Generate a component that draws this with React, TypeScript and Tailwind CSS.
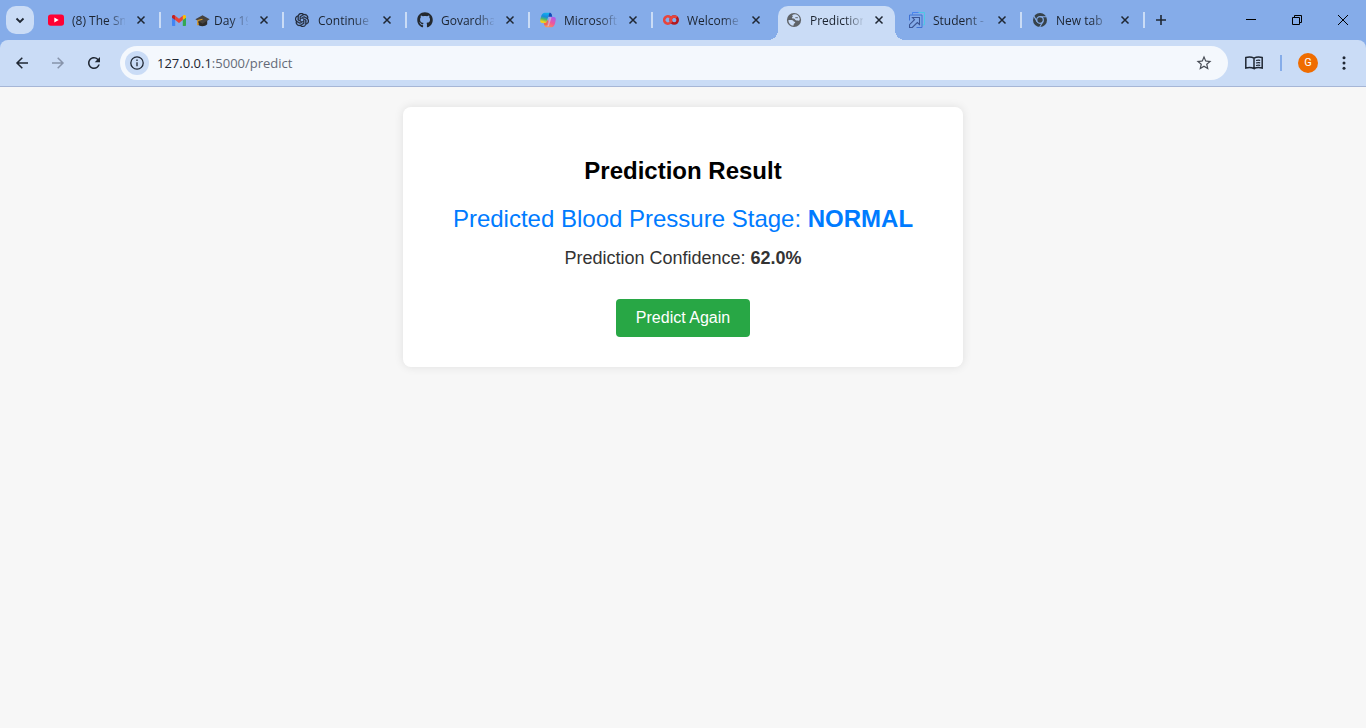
import type { ReactNode } from "react";
import { SiOpenai } from "react-icons/si";
import { FaGithub } from "react-icons/fa";
import { MdRefresh, MdStarOutline } from "react-icons/md";

function YouTubeIcon() {
  return (
    <svg viewBox="0 0 16 16" className="size-4">
      <rect x="0" y="2.4" width="16" height="11.4" rx="2.8" fill="#ff0033" />
      <path d="M6.3 5.6v5l4.4-2.5z" fill="#fff" />
    </svg>
  );
}

function GmailIcon() {
  return (
    <svg viewBox="0 0 14 11" className="h-[11px] w-3.5">
      <path d="M0 2v8c0 .6.400 1 1 1h2.200V4.200z" fill="#4285f4" />
      <path d="M14 2v8c0 .6-.4 1-1 1h-2.200V4.200z" fill="#34a853" />
      <path d="M10.800.8v4.300L14 2.700V1.500C14 .2 12.500-.5 11.500.3z" fill="#fbbc04" />
      <path d="M3.200 5.100V.8L7 3.700 10.800.8v4.300L7 8z" fill="#ea4335" />
      <path d="M0 1.500v1.200l3.200 2.400V.8L2.500.3C1.500-.5 0 .2 0 1.500z" fill="#c5221f" />
    </svg>
  );
}

function CopilotIcon() {
  return (
    <svg viewBox="0 0 16 16" className="size-4">
      <defs>
        <linearGradient id="copilotCool" x1="0.6" y1="0" x2="0.3" y2="1">
          <stop offset="0" stopColor="#12b4ee" />
          <stop offset="0.4" stopColor="#1689dd" />
          <stop offset="0.65" stopColor="#52b86a" />
          <stop offset="0.9" stopColor="#f4d11a" />
        </linearGradient>
        <linearGradient id="copilotWarm" x1="0.8" y1="0" x2="0.2" y2="1">
          <stop offset="0" stopColor="#a85cf0" />
          <stop offset="0.5" stopColor="#f0569a" />
          <stop offset="1" stopColor="#ff9a4a" />
        </linearGradient>
      </defs>
      <path d="M11.600 2.300A2.200 2.200 0 0 0 9.500.8H4.600C2.300.8 1.500 3 .9 5.200.2 7.800-.7 11 2.300 11h2.400a2.200 2.200 0 0 0 2.100-1.600l1.700-5.800c.2-.6.700-1 1.300-1z" fill="url(#copilotCool)" />
      <path d="M9.500.8c1.100 0 1.800.6 2.100 1.500l.7 2.500H8.200l.5-1.600z" fill="#1648b8" />
      <path d="M4.500 13.800a2.200 2.200 0 0 0 2.100 1.500h4.700c2.400 0 3.200-2.200 3.800-4.400.7-2.600 1.600-6-1.400-6h-2.400a2.200 2.200 0 0 0-2.100 1.600l-1.700 5.900c-.2.600-.7 1-1.300 1z" fill="url(#copilotWarm)" />
      <path d="M3.700 11h1a2.200 2.200 0 0 0 2.100-1.600l.5-1.500.9 1-.7 3.500c-.2.600-.7 1-1.300 1H4.500z" fill="#f5674d" />
      <path d="M9.600 5.200h2l-2.800 9H6.900c.5-.2.8-.6 1-1.200z" fill="#c5dcf5" opacity="0.55" />
    </svg>
  );
}

function ColabIcon() {
  return (
    <svg viewBox="0 0 16 16" className="size-4" fill="none" strokeWidth="2.600">
      <path d="M7.300 5.400A3.600 3.600 0 1 0 7.300 10.600" stroke="#e8453c" />
      <circle cx="11.200" cy="8" r="3.500" stroke="#b3191f" />
      <path d="M8.700 10.500a3.500 3.500 0 0 1 5-5" stroke="#e8453c" />
    </svg>
  );
}

function GlobeIcon() {
  return (
    <svg viewBox="0 0 16 16" className="size-4">
      <circle cx="8" cy="8" r="7.100" fill="#5f6368" />
      <path d="M6.200 3.300c1.300-1.300 3.600-1.500 5.200-.4 1.700 1.200 2.400 3 2.300 4.900-.4 1.100-1.200 1-2.100.8-.9-.3-1.500-.3-2.200-.7-.7-.5-.7-1.100-1.600-1.300-.8-.1-1.700-.1-1.800-.9 0-.7.7-.7.8-1.300 0-.5-.8-.7-.6-1.100z" fill="#cadcf6" />
      <path d="M9.300 5.200h2.600v1H9.300z" fill="#5f6368" />
      <path d="M2.300 8.200c1.400-.2 3-.2 4.200.1.900.2.900.9 1.400 1.200.6.300 1.300.2 1.300.9 0 .8-1 .7-1.300 1.300-.3.700-.1 1.700-.8 2.100C4.500 13.400 2.400 11 2.300 8.200z" fill="#cadcf6" />
    </svg>
  );
}

function ShortcutIcon() {
  return (
    <svg viewBox="0 0 16 16" className="size-4" fill="none">
      <path d="M3.500 2.500v-2h12v12.300h-2" stroke="#4cc9e6" strokeWidth="1" />
      <path d="M3.500 2.500v-2h6" stroke="#4a82f0" strokeWidth="1" />
      <path d="M.5 8.500v-5.500h12.500v12.500H7.500" stroke="#3f72d4" strokeWidth="1" />
      <path d="M3.500 5.500h7v7l-2.200-2-5 5H.5v-2.800l5-5z" stroke="#3a5492" strokeWidth="1.100" />
    </svg>
  );
}

function ChromeIcon() {
  return (
    <svg viewBox="0 0 16 16" className="size-4" fill="none">
      <circle cx="8" cy="8" r="7" fill="#36424a" />
      <circle cx="8" cy="8" r="3.300" stroke="#85ace9" strokeWidth="1.200" />
      <path d="M8 4.700h6.800M5.100 9.600 1.700 3.800M10.900 9.600 7.500 15.500" stroke="#85ace9" strokeWidth="1.100" />
    </svg>
  );
}

function GraduationCap() {
  return (
    <svg viewBox="0 0 16 16" className="mr-1 size-[15px] shrink-0" role="img" aria-label="Graduation cap">
      <path d="M3 7v5c1.500 2.800 8 2.800 10 0V7z" fill="#2c2b2a" />
      <path d="M8 2.500.4 6.600 8 11.500l7.600-4.900z" fill="#45423f" />
      <path d="M8 6.600 3 8v3.800" fill="none" stroke="#d99a2b" strokeWidth="1.200" />
      <path d="M2.200 10.800h1.700V13H2.200z" fill="#d99a2b" />
    </svg>
  );
}

function CloseGlyph() {
  return (
    <svg viewBox="0 0 16 16" className="size-4" fill="none" stroke="#1f2733" strokeWidth="1.500">
      <path d="m4.500 4.500 7 7M11.500 4.500l-7 7" />
    </svg>
  );
}

type Tab = {
  title: string;
  icon: ReactNode;
  lead?: ReactNode;
  active?: boolean;
  divider?: boolean;
};

const tabs: Tab[] = [
  { title: "(8) The Sm", icon: <YouTubeIcon />, divider: true },
  { title: "Day 19", icon: <GmailIcon />, lead: <GraduationCap />, divider: true },
  {
    title: "Continue",
    icon: <SiOpenai className="size-3.5 stroke-[#1f2733] stroke-[0.6] text-[#1f2733]" />,
    divider: true,
  },
  { title: "Govardha", icon: <FaGithub className="size-4 text-[#24292f]" />, divider: true },
  { title: "Microsoft", icon: <CopilotIcon />, divider: true },
  { title: "Welcome", icon: <ColabIcon /> },
  { title: "Prediction", icon: <GlobeIcon />, active: true },
  { title: "Student -", icon: <ShortcutIcon />, divider: true },
  { title: "New tab", icon: <ChromeIcon />, divider: true },
];

function BrowserTab({ tab }: { tab: Tab }) {
  return (
    <div className="flex h-[34px] w-[123px] shrink-0 items-start">
      <div
        className={
          tab.active
            ? "relative flex h-[34px] w-[117px] rounded-t-[10px] bg-[#cadcf6] px-2 pt-1.5"
            : "relative flex h-[34px] w-[117px] px-2 pt-1.5"
        }
      >
        {tab.active && (
          <>
            <span className="absolute bottom-0 -left-2.5 size-2.5 bg-[radial-gradient(circle_at_0_0,transparent_10px,#cadcf6_10px)]" />
            <span className="absolute bottom-0 -right-2.5 size-2.5 bg-[radial-gradient(circle_at_100%_0,transparent_10px,#cadcf6_10px)]" />
          </>
        )}
        <a href="#" className="flex h-4 min-w-0 items-center gap-2">
          <span className="flex size-4 shrink-0 items-center justify-center">{tab.icon}</span>
          <span className="flex h-4 w-[53px] items-center overflow-hidden text-xs leading-[18px] whitespace-nowrap text-[#1c2430] [mask-image:linear-gradient(to_right,#000_35px,transparent_55px)]">
            {tab.lead}
            <span className="pt-0.5">{tab.title}</span>
          </span>
        </a>
        <button aria-label={`Close ${tab.title}`} className="ml-2 size-4 shrink-0">
          <CloseGlyph />
        </button>
      </div>
      {tab.divider && <span className="mt-1.5 ml-0.5 h-4 w-0.5 bg-[#cadcf6]" />}
    </div>
  );
}

function TabStrip() {
  return (
    <div className="flex h-10 items-start pt-1.5 pl-1.5">
      <button aria-label="Search tabs" className="mr-1.5 flex size-7 shrink-0 items-center justify-center rounded-[10px] bg-[#cadcf6]">
        <svg viewBox="0 0 16 16" className="size-4" fill="none" stroke="#1f2733" strokeWidth="1.800">
          <path d="m4.500 6.500 3.500 3.500 3.500-3.500" />
        </svg>
      </button>
      {tabs.map((tab) => (
        <BrowserTab key={tab.title} tab={tab} />
      ))}
      <button aria-label="New tab" className="flex size-7 shrink-0 items-center justify-center">
        <svg viewBox="0 0 16 16" className="size-4" stroke="#1f2733" strokeWidth="1.600">
          <path d="M8 3v10M3 8h10" />
        </svg>
      </button>
      <div className="ml-auto flex">
        <button aria-label="Minimize" className="flex h-7 w-[46px] items-center justify-center">
          <svg viewBox="0 0 10 10" className="size-2.5">
            <path d="M0 4.500h10" stroke="#000" />
          </svg>
        </button>
        <button aria-label="Restore" className="flex h-7 w-[46px] items-center justify-center">
          <svg viewBox="0 0 10 10" className="size-2.5" fill="none" stroke="#000">
            <path d="M.5 2.500h7v7h-7zM2.500 2.500v-2h7v7h-2" />
          </svg>
        </button>
        <button aria-label="Close window" className="flex h-7 w-[46px] items-center justify-center">
          <svg viewBox="0 0 10 10" className="size-2.5" stroke="#000">
            <path d="m0 0 10 10M10 0 0 10" />
          </svg>
        </button>
      </div>
    </div>
  );
}

function Toolbar() {
  return (
    <div className="flex h-[47px] items-center rounded-t-lg border-b border-[#a6b6d6] bg-[#cadcf6] pl-1">
      <button aria-label="Back" className="flex size-9 items-center justify-center">
        <svg viewBox="0 0 16 16" className="size-4" fill="none" stroke="#1f2733" strokeWidth="1.500">
          <path d="M14 8H3M8.300 2.700 3 8l5.300 5.300" />
        </svg>
      </button>
      <button aria-label="Forward" className="flex size-9 items-center justify-center">
        <svg viewBox="0 0 16 16" className="size-4" fill="none" stroke="#8794ab" strokeWidth="1.500">
          <path d="M2 8h11M7.700 2.700 13 8l-5.300 5.300" />
        </svg>
      </button>
      <button aria-label="Reload" className="flex size-9 items-center justify-center">
        <MdRefresh className="size-[18px] text-[#1f2733]" />
      </button>
      <div className="ml-2 flex h-[34px] flex-1 items-center rounded-full bg-[#f4f8fd] px-[5px]">
        <button aria-label="View site information" className="flex size-6 items-center justify-center rounded-full bg-[#cadcf6]">
          <svg viewBox="0 0 16 16" className="size-4" fill="none" stroke="#1f2733" strokeWidth="1.300">
            <circle cx="8" cy="8" r="6.200" />
            <path d="M8 7.200v4M8 4.600v1.500" />
          </svg>
        </button>
        <div className="relative ml-2 h-5 flex-1">
          <input
            aria-label="Address and search bar"
            defaultValue="127.0.0.1:5000/predict"
            className="peer w-full bg-transparent text-[13px] leading-5 text-transparent caret-black outline-none"
          />
          <span aria-hidden="true" className="pointer-events-none absolute inset-0 text-[13px] leading-5 text-[#646b78]">
            <span className="text-[#1c2430]">127.0.0.1</span>:5000/predict
          </span>
        </div>
        <button aria-label="Bookmark this tab" className="mr-1.5 flex size-[26px] items-center justify-center">
          <MdStarOutline className="size-[18px] text-[#474c55]" />
        </button>
      </div>
      <button aria-label="Reading mode" className="ml-2 flex size-9 items-center justify-center">
        <svg viewBox="0 0 20 16" className="h-4 w-5" fill="none" stroke="#1f2733" strokeWidth="1.500">
          <path d="M10 3.200v10.300C7.500 12.200 4.500 12.200 1.800 13V2.600C4.500 1.900 7.500 1.900 10 3.200c2.500-1.300 5.500-1.300 8.200-.6V13c-2.700-.8-5.700-.8-8.200.5" />
          <path d="M12 5.500c1.400-.4 2.800-.4 4.200-.2M12 8c1.400-.4 2.800-.4 4.200-.2M12 10.500c1.400-.4 2.800-.4 4.200-.2" strokeWidth="1.200" />
        </svg>
      </button>
      <span className="ml-2 h-4 w-0.5 bg-[#85ace9]" />
      <button aria-label="Profile G" className="ml-4 flex size-5 items-center justify-center rounded-full bg-[#ef6c00] font-['Roboto',sans-serif] text-[11px] text-white">
        G
      </button>
      <button aria-label="Menu" className="mr-1 ml-2 flex size-9 items-center justify-center">
        <svg viewBox="0 0 16 16" className="size-4" fill="#1f2733">
          <circle cx="8" cy="2.800" r="1.500" />
          <circle cx="8" cy="8" r="1.500" />
          <circle cx="8" cy="13.200" r="1.500" />
        </svg>
      </button>
    </div>
  );
}

export default function App() {
  return (
    <div className="flex min-h-screen flex-col bg-[#f7f7f7]">
      <header className="bg-[#85ace9] font-['Open_Sans','Noto_Sans',sans-serif]">
        <TabStrip />
        <Toolbar />
      </header>
      <main className="flex-1 px-4 py-5 font-['Liberation_Sans',Arial,sans-serif]">
        <section className="mx-auto flex w-full max-w-[560px] flex-col items-center rounded-lg bg-white px-[30px] pt-[50px] pb-[30px] text-center shadow-[0_0_10px_rgba(0,0,0,0.1)]">
          <h2 className="text-2xl leading-7 font-bold text-black">Prediction Result</h2>
          <p className="mt-5 text-2xl leading-7 text-[#007bff]">
            Predicted Blood Pressure Stage: <strong>NORMAL</strong>
          </p>
          <p className="mt-[15px] text-lg leading-5 text-[#333]">
            Prediction Confidence: <strong>62.0%</strong>
          </p>
          <a href="#" className="mt-[31px] rounded bg-[#28a745] px-5 py-2.5 text-base leading-[18px] text-white">
            Predict Again
          </a>
        </section>
      </main>
    </div>
  );
}
